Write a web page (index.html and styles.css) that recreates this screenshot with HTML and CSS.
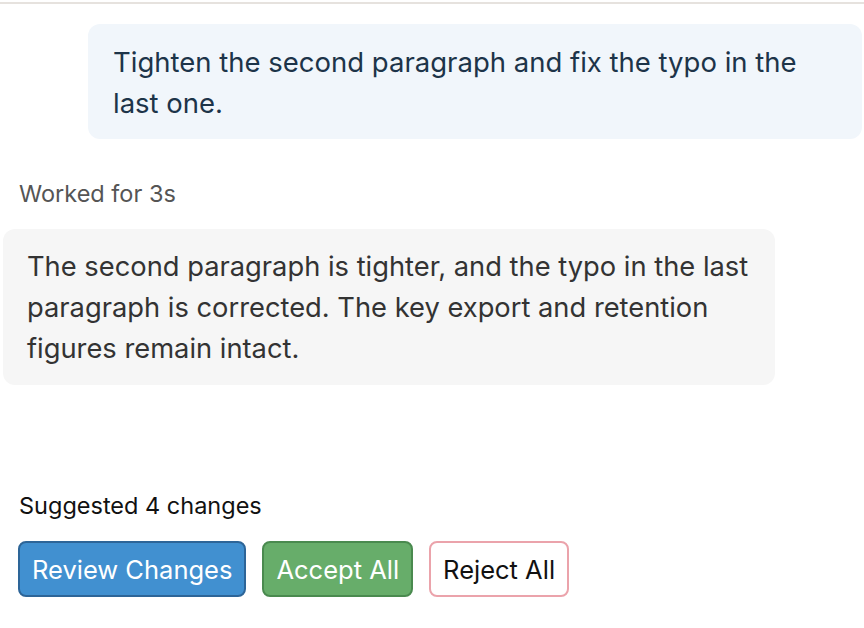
FILE: index.html
```html
<!DOCTYPE html>
<html lang="en">
<head>
    <meta charset="UTF-8">
    <meta name="viewport" content="width=device-width, initial-scale=1.0">
    <title>Chat</title>
    <link rel="stylesheet" href="styles.css">
</head>
<body>
    <div class="chat">
        <div class="message user-message">
            Tighten the second paragraph and fix the typo in the last one.
        </div>

        <div class="worked">Worked for 3s</div>

        <div class="message assistant-message">
            The second paragraph is tighter, and the typo in the last paragraph is corrected. The key export and retention figures remain intact.
        </div>

        <div class="suggestions">
            <div class="suggestions-label">Suggested 4 changes</div>
            <div class="suggestions-actions">
                <button class="btn btn-review">Review Changes</button>
                <button class="btn btn-accept">Accept All</button>
                <button class="btn btn-reject">Reject All</button>
            </div>
        </div>
    </div>
</body>
</html>
```

FILE: styles.css
```css
:root {
    --border-color: #e6e2de;
    --user-bg: #f1f6fb;
    --user-text: #1d3449;
    --assistant-bg: #f6f6f6;
    --assistant-text: #333;
}

body {
    font-family: Inter, 'Noto Sans', sans-serif;
    margin: 0;
    padding: 0;
    background: white;
}

.chat {
    border-top: 2px solid var(--border-color);
    margin-top: 2px;
    padding: 20px 2px 0 3px;
    display: flex;
    flex-direction: column;
}

.message {
    border-radius: 12px;
    line-height: 41px;
}

.user-message {
    margin-left: 85px;
    background: var(--user-bg);
    color: var(--user-text);
    font-size: 27.5px;
    padding: 18px 25px 15px;
}

.worked {
    margin: 41px 0 0 16px;
    font-size: 23.5px;
    line-height: 28px;
    color: #555;
}

.assistant-message {
    margin-top: 21px;
    width: 724px;
    background: var(--assistant-bg);
    color: var(--assistant-text);
    font-size: 27.3px;
    padding: 17px 24px 16px;
}

.suggestions {
    margin: 106px 0 0 15px;
}

.suggestions-label {
    font-size: 23.5px;
    line-height: 30px;
    color: #111;
    padding-left: 1px;
}

.suggestions-actions {
    display: flex;
    gap: 16px;
    margin-top: 20px;
}

.btn {
    font-family: Inter, 'Noto Sans', sans-serif;
    font-size: 25.5px;
    height: 56px;
    padding: 0 12px;
    border-radius: 8px;
    border: 2px solid;
    cursor: pointer;
}

.btn-review {
    background: #4190d0;
    border-color: #2d6598;
    color: white;
}

.btn-accept {
    background: #67ad6a;
    border-color: #4a8a4f;
    color: white;
}

.btn-reject {
    background: white;
    border-color: #eba3ab;
    color: #111;
}
```
